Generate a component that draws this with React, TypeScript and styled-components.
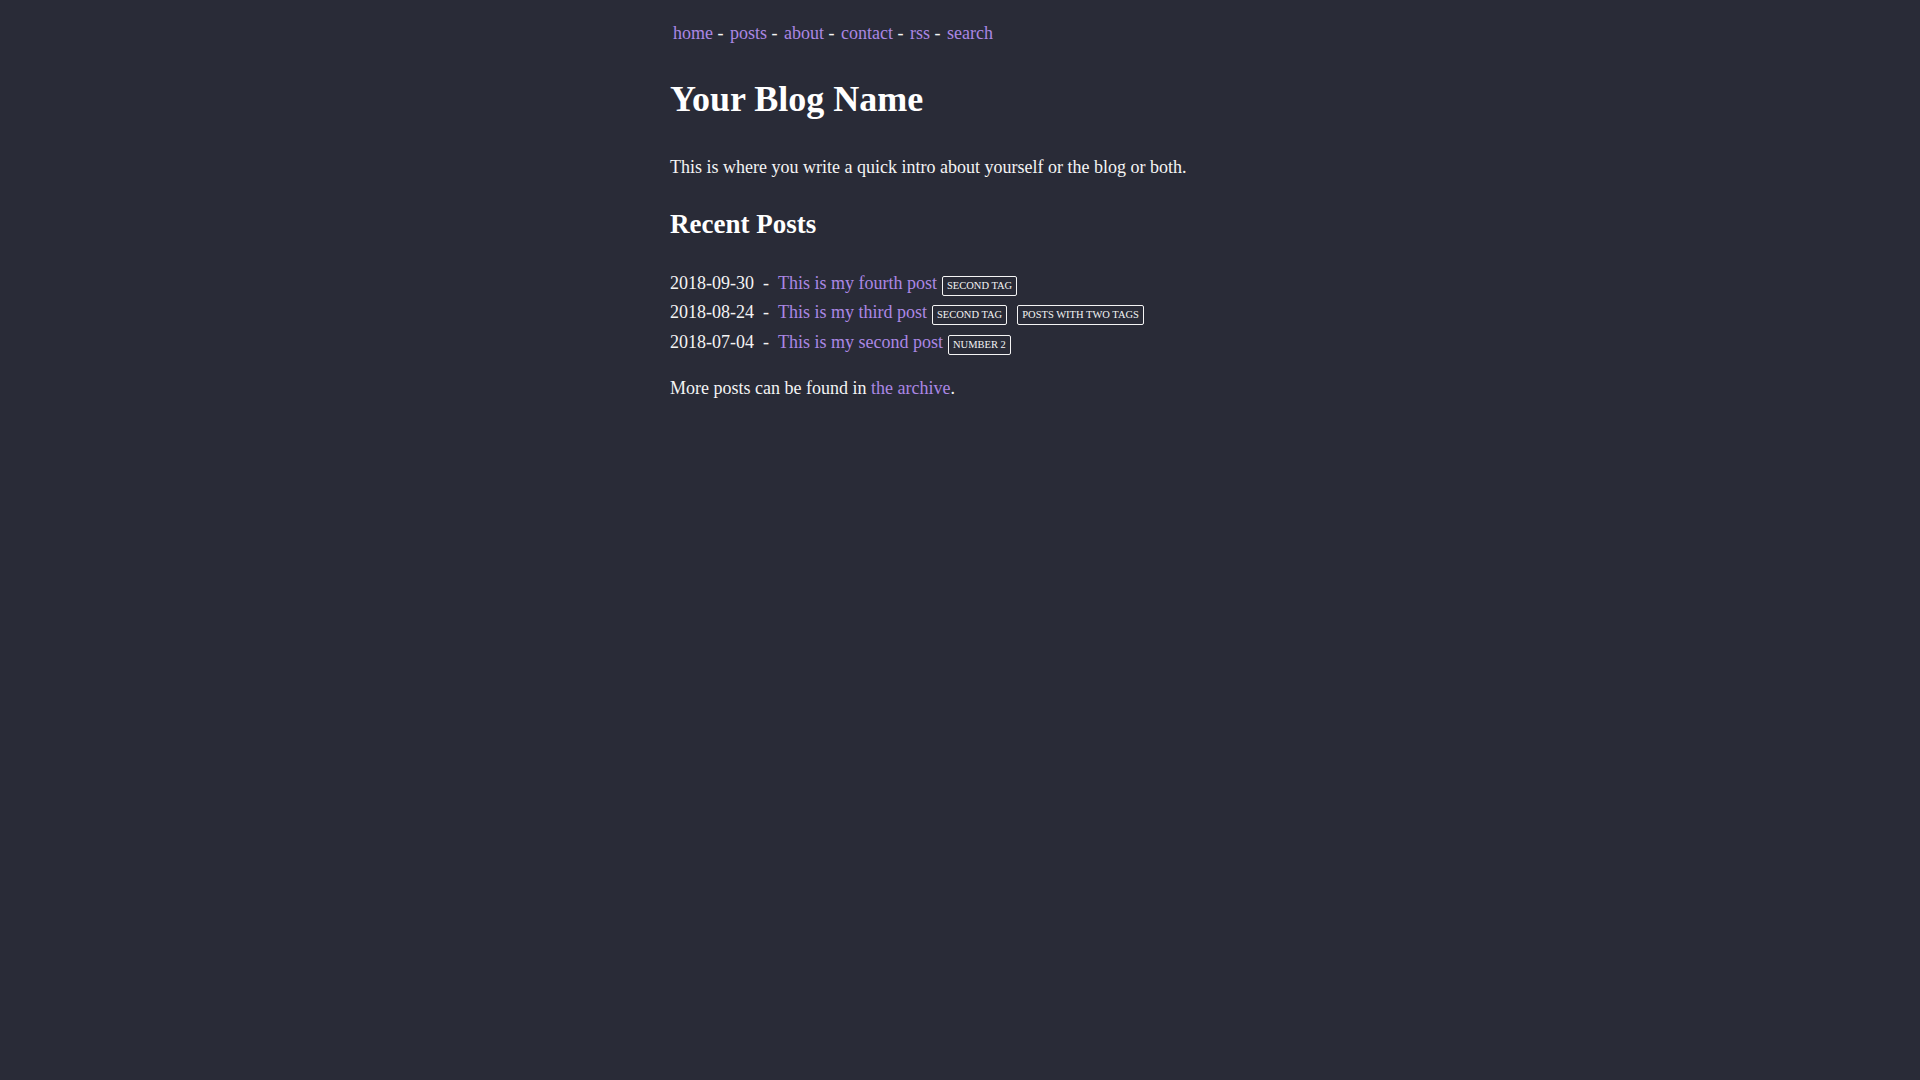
import React from 'react';
import styled, { createGlobalStyle } from 'styled-components';

const GlobalStyle = createGlobalStyle`
  html, body {
    margin: 0;
    padding: 0;
    background: #292b37;
  }
  body {
    font-family: 'Liberation Serif', 'Times New Roman', serif;
    font-size: 18px;
    line-height: 1.6;
    color: #f4f4f4;
  }
`;

const Page = styled.div`
  width: 580px;
  margin: 0 auto;
  padding-top: 19px;
  min-height: 100vh;
  box-sizing: border-box;
`;

const Nav = styled.nav`
  white-space: pre;
  a {
    margin-left: 6.5px;
  }
  a:first-child {
    margin-left: 3px;
  }
`;

const Link = styled.a`
  color: #ab87e4;
  text-decoration: none;
`;

const Title = styled.h1`
  font-size: 36px;
  line-height: 1.2;
  font-weight: 700;
  color: #ffffff;
  margin: 30px 0 0;
`;

const Intro = styled.p`
  margin: 32px 0 0;
`;

const SectionTitle = styled.h2`
  font-size: 27px;
  line-height: 1.2;
  font-weight: 700;
  color: #ffffff;
  margin: 26px 0 0;
`;

const PostList = styled.ul`
  list-style: none;
  padding: 0;
  margin: 29px 0 0;
`;

const PostRow = styled.li`
  display: flex;
  align-items: baseline;
  line-height: 29.3px;
  white-space: pre;
`;

const Tag = styled.span<{ $first?: boolean }>`
  display: inline-block;
  margin-left: ${({ $first }) => ($first ? '5px' : '10px')};
  padding: 3px 4px;
  border: 1px solid #f4f4f4;
  border-radius: 2px;
  font-size: 10.5px;
  line-height: 12px;
  text-transform: uppercase;
  color: #f4f4f4;
`;

const Footer = styled.p`
  margin: 17px 0 0;
`;

type Post = { date: string; title: string; tags: string[] };

const posts: Post[] = [
  { date: '2018-09-30', title: 'This is my fourth post', tags: ['second tag'] },
  { date: '2018-08-24', title: 'This is my third post', tags: ['second tag', 'posts with two tags'] },
  { date: '2018-07-04', title: 'This is my second post', tags: ['number 2'] },
];

const navItems = ['home', 'posts', 'about', 'contact', 'rss', 'search'];

const App = () => {
  return (
    <>
      <GlobalStyle />
      <Page>
        <header>
          <Nav>
            {navItems.map((item, index) => (
              <React.Fragment key={item}>
                <Link href="#">{item}</Link>
                {index < navItems.length - 1 ? ' -' : ''}
              </React.Fragment>
            ))}
          </Nav>
        </header>
        <main>
          <Title>Your Blog Name</Title>
          <Intro>This is where you write a quick intro about yourself or the blog or both.</Intro>
          <SectionTitle>Recent Posts</SectionTitle>
          <PostList>
            {posts.map((post) => (
              <PostRow key={post.date}>
                <span>{post.date}</span>
                <span>{'  -  '}</span>
                <Link href="#">{post.title}</Link>
                {post.tags.map((tag, i) => (
                  <Tag key={tag} $first={i === 0}>
                    {tag}
                  </Tag>
                ))}
              </PostRow>
            ))}
          </PostList>
          <Footer>
            More posts can be found in <Link href="#">the archive</Link>.
          </Footer>
        </main>
      </Page>
    </>
  );
};

export default App;
